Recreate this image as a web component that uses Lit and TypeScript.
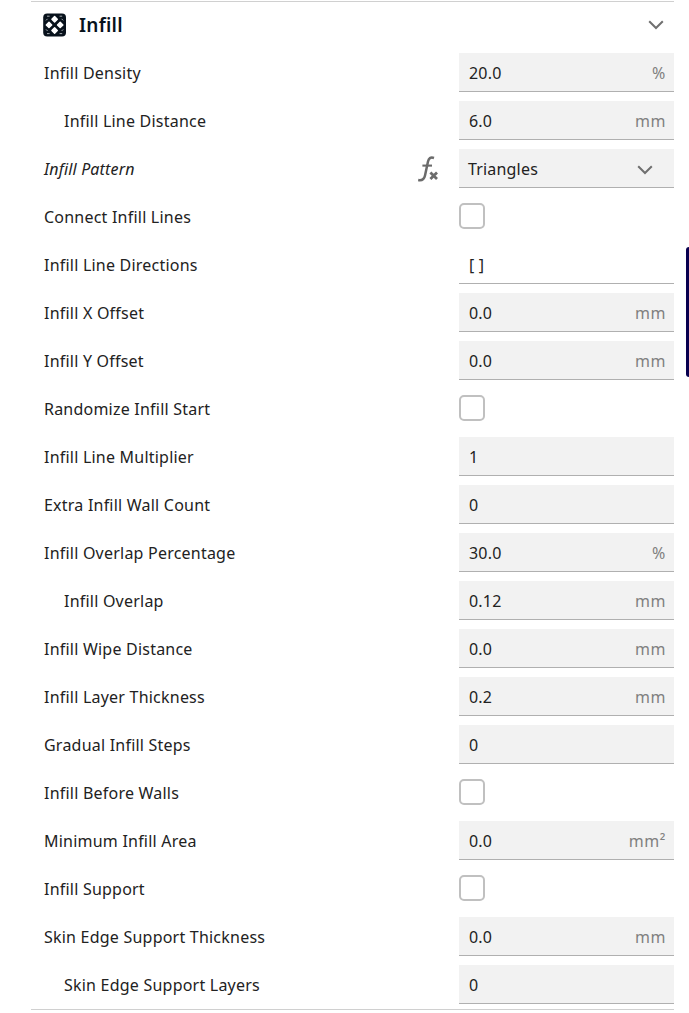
import { LitElement, html, css, nothing } from "lit";
import { customElement, property } from "lit/decorators.js";

type Kind = "text" | "check" | "select" | "plain";
interface Setting {
  label: string;
  kind?: Kind;
  value?: string;
  unit?: string;
  child?: boolean;
  formula?: boolean;
}

const SETTINGS: Setting[] = [
  { label: "Infill Density", value: "20.0", unit: "%" },
  { label: "Infill Line Distance", value: "6.0", unit: "mm", child: true },
  { label: "Infill Pattern", kind: "select", value: "Triangles", formula: true },
  { label: "Connect Infill Lines", kind: "check" },
  { label: "Infill Line Directions", kind: "plain", value: "[ ]" },
  { label: "Infill X Offset", value: "0.0", unit: "mm" },
  { label: "Infill Y Offset", value: "0.0", unit: "mm" },
  { label: "Randomize Infill Start", kind: "check" },
  { label: "Infill Line Multiplier", value: "1" },
  { label: "Extra Infill Wall Count", value: "0" },
  { label: "Infill Overlap Percentage", value: "30.0", unit: "%" },
  { label: "Infill Overlap", value: "0.12", unit: "mm", child: true },
  { label: "Infill Wipe Distance", value: "0.0", unit: "mm" },
  { label: "Infill Layer Thickness", value: "0.2", unit: "mm" },
  { label: "Gradual Infill Steps", value: "0" },
  { label: "Infill Before Walls", kind: "check" },
  { label: "Minimum Infill Area", value: "0.0", unit: "mm²" },
  { label: "Infill Support", kind: "check" },
  { label: "Skin Edge Support Thickness", value: "0.0", unit: "mm" },
  { label: "Skin Edge Support Layers", value: "0", child: true },
];

const chevron = html`<svg width="16" height="10" viewBox="0 0 16 10" fill="none" stroke="#707070" stroke-width="2">
  <path d="M1.2 1.2 L8 8 L14.8 1.2" />
</svg>`;

@customElement("setting-row")
export class SettingRow extends LitElement {
  @property({ attribute: false }) item!: Setting;

  static styles = css`
    :host { display: flex; height: 48px; align-items: flex-start; }
    .label { flex: 1; padding-left: 13px; line-height: 41px; white-space: nowrap; letter-spacing: 0.22px; }
    .child { padding-left: 33px; }
    .italic { font-style: italic; letter-spacing: 0.15px; }
    .fx { width: 22px; height: 26px; margin: 7px 20px 0 0; }
    .fx svg { display: block; }
    .slot { width: 215px; }
    .field {
      box-sizing: border-box; height: 39px; padding: 0 8px 0 10px;
      display: flex; justify-content: space-between; align-items: center;
      line-height: 40px; background: #f2f2f2; border-bottom: 1px solid #b0b0b0;
      letter-spacing: 0.18px;
    }
    .field span { height: 38px; }
    .field svg { margin-top: 3px; }
    .plain { background: #fff; }
    .select { padding: 0 21px 0 9px; }
    .unit { color: #808080; letter-spacing: 0.6px; }
    .box {
      box-sizing: border-box; width: 26px; height: 26px; margin-top: 6px;
      border: 2px solid #c0c0c0; border-radius: 5px; background: #fff;
    }
  `;

  private control() {
    const { kind, value, unit } = this.item;
    if (kind === "check") return html`<div class="box"></div>`;
    if (kind === "select") return html`<div class="field select"><span>${value}</span>${chevron}</div>`;
    return html`<div class="field ${kind === "plain" ? "plain" : ""}">
      <span>${value}</span>${unit ? html`<span class="unit">${unit}</span>` : nothing}
    </div>`;
  }

  render() {
    const { label, child, formula } = this.item;
    return html`
      <div class="label ${child ? "child" : ""} ${formula ? "italic" : ""}">${label}</div>
      ${formula
        ? html`<div class="fx"><svg width="22" height="26" viewBox="0 0 22 26" fill="none" stroke="#6b6b6b">
            <path stroke-width="2.5" d="M17 2 C13.4 .8 11.7 2.4 11 5.6 L8 19.4 C7.2 23.2 5 24.7 1.2 24" />
            <path stroke-width="2.1" d="M5.4 9.6 H15" />
            <path stroke-width="2.8" d="M13.4 16.6 L20 23 M20 16.6 L13.4 23" />
          </svg></div>`
        : nothing}
      <div class="slot">${this.control()}</div>
    `;
  }
}

@customElement("app-root")
export class AppRoot extends LitElement {
  static styles = css`
    :host {
      display: flex; justify-content: space-between; height: 1013px; overflow: hidden; background: #fff;
      font: 16px "Noto Sans", sans-serif; color: #222;
    }
    .panel { box-sizing: border-box; width: 643px; height: 1009px; margin: 1px 0 0 31px; border: solid #d0d0d0; border-width: 1px 0; }
    .head { display: flex; align-items: center; height: 46px; padding: 0 10.5px 0 12px; margin-bottom: 5px; }
    .title { flex: 1; margin-left: 12px; font-size: 19px; font-weight: 600; line-height: 46px; letter-spacing: 0.25px; color: #08121c; }
    .head svg { display: block; }
    .thumb { width: 3px; height: 130px; margin-top: 247px; border-radius: 4px 0 0 4px; background: #08004f; }
  `;

  render() {
    return html`
      <div class="panel">
        <div class="head">
          <svg width="24" height="24" viewBox="0 0 24 24">
            <rect x=".2" y=".4" width="22.8" height="23" rx="4" fill="#08121c" />
            <g fill="#fff" stroke="#fff" stroke-width="1.4" stroke-linejoin="round">
              <path d="M11.6 3.6 L14.3 6.3 L11.6 9 L8.9 6.3 Z" />
              <path d="M11.6 14.8 L14.3 17.5 L11.6 20.2 L8.9 17.5 Z" />
              <path d="M6 9.2 L8.7 11.9 L6 14.6 L3.3 11.9 Z" />
              <path d="M17.2 9.2 L19.9 11.9 L17.2 14.6 L14.5 11.9 Z" />
            </g>
            <path stroke="#a5abb0" stroke-width="1" fill="none" d="M4 3.2 H6.6 M16.6 3.2 H19.2 M4 20.6 H6.6 M16.6 20.6 H19.2 M3 7.4 L4.6 5.8 M20.2 7.4 L18.6 5.8 M3 16.4 L4.6 18 M20.2 16.4 L18.6 18" />
          </svg>
          <div class="title">Infill</div>
          ${chevron}
        </div>
        ${SETTINGS.map((s) => html`<setting-row .item=${s}></setting-row>`)}
      </div>
      <div class="thumb"></div>
    `;
  }
}
